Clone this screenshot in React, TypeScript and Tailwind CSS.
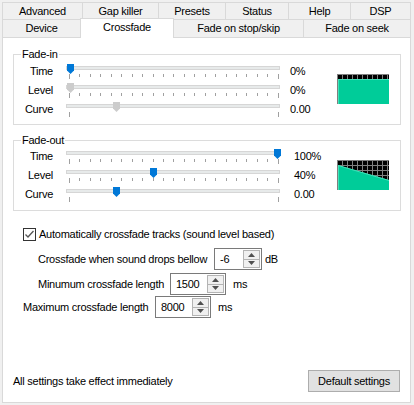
import React from "react";

const TICKS = Array.from({ length: 21 }, (_, i) => i);

function Thumb({ pos, active }: { pos: number; active: boolean }) {
  return (
    <svg
      width="7"
      height="10"
      viewBox="0 0 7 10"
      className="absolute top-[2px]"
      style={{ left: 2 + Math.round(pos * 207) }}
    >
      <path d="M0 0H7V6.5L3.5 10L0 6.5Z" fill={active ? "#0078d7" : "#cccccc"} />
    </svg>
  );
}

function Slider({ pos, active, full }: { pos: number; active: boolean; full: boolean }) {
  const ticks = full ? TICKS : [0, 20];
  return (
    <div className="relative w-[216px] h-[19px] ml-[12px]">
      <div className="mt-[4px] mx-[1px] h-[4px] bg-[#e7eaea] border border-[#d6d6d6]" />
      <div className="mt-[4px] ml-[4px] mr-[2px] flex justify-between items-start">
        {ticks.map((t) => (
          <div
            key={t}
            className={t === 0 || t === 20 ? "w-px h-[5px] bg-[#a0a0a0]" : "w-px h-[3px] bg-[#a0a0a0]"}
          />
        ))}
      </div>
      <Thumb pos={pos} active={active} />
    </div>
  );
}

type Row = { label: string; value: string; pos: number; active: boolean; full: boolean };

function Graph({ left, right }: { left: number; right: number }) {
  const lines = [];
  for (let x = 0; x <= 52; x += 5) lines.push(<line key={"x" + x} x1={x + 0.5} y1="0" x2={x + 0.5} y2="30" />);
  for (let y = 0; y <= 30; y += 5) lines.push(<line key={"y" + y} x1="0" y1={y + 0.5} x2="52" y2={y + 0.5} />);
  return (
    <svg width="52" height="30" viewBox="0 0 52 30">
      <rect width="52" height="30" fill="#000" />
      <g stroke="#808080" strokeWidth="1">{lines}</g>
      <polygon points={`1,${left} 52,${right} 52,30 1,30`} fill="#00cc99" />
      <line x1="1" y1={left + 0.5} x2="52" y2={right + 0.5} stroke="#40e0b8" strokeWidth="1" />
      <line x1="1.5" y1={left} x2="1.5" y2="30" stroke="#40e0b8" strokeWidth="1" />
      <line x1="0.5" y1="0" x2="0.5" y2="30" stroke="#808080" strokeWidth="1" />
    </svg>
  );
}

function Group({
  title,
  rows,
  boxClass,
  valueGap,
  graphTop,
  graph,
}: {
  title: string;
  rows: Row[];
  boxClass: string;
  valueGap: string;
  graphTop: string;
  graph: [number, number];
}) {
  return (
    <fieldset className={`w-[388px] border border-[#dcdcdc] ${boxClass}`}>
      <legend className="ml-[7px] px-[1px] leading-[14px]">{title}</legend>
      <div className="flex">
        <div className="flex flex-col">
          {rows.map((r) => (
            <div key={r.label} className="flex items-center h-[19px]">
              <div className="w-[39px] text-right">{r.label}</div>
              <Slider pos={r.pos} active={r.active} full={r.full} />
              <div className={valueGap}>{r.value}</div>
            </div>
          ))}
        </div>
        <div className={graphTop}>
          <Graph left={graph[0]} right={graph[1]} />
        </div>
      </div>
    </fieldset>
  );
}

function Spin({ value, width }: { value: string; width: string }) {
  return (
    <div className={`flex h-[22px] bg-white border border-[#7a7a7a] ${width}`}>
      <div className="flex-1 pl-[5px] flex items-center">{value}</div>
      <div className="flex flex-col w-[17px] my-px mr-px">
        <div className="flex-1 flex items-center justify-center bg-[#f0f0f0] border border-[#b4b4b4]">
          <svg width="7" height="4" viewBox="0 0 7 4">
            <path d="M0 4L3.5 0L7 4Z" fill="#505050" />
          </svg>
        </div>
        <div className="flex-1 flex items-center justify-center bg-[#f0f0f0] border border-t-0 border-[#b4b4b4]">
          <svg width="7" height="4" viewBox="0 0 7 4">
            <path d="M0 0L3.5 4L7 0Z" fill="#505050" />
          </svg>
        </div>
      </div>
    </div>
  );
}

const TOP_TABS = [
  { name: "Advanced", w: "w-[80px]" },
  { name: "Gap killer", w: "w-[76px]" },
  { name: "Presets", w: "w-[67px]" },
  { name: "Status", w: "w-[63px]" },
  { name: "Help", w: "w-[62px]" },
  { name: "DSP", w: "w-[61px] border-r" },
];

export default function App() {
  return (
    <div className="w-[414px] h-[405px] bg-[#f0f0f0] pt-[2px] pl-[2px] text-[11px] tracking-[-0.25px] whitespace-nowrap text-black font-['Liberation_Sans',Arial,sans-serif]">
      {/* Tabs */}
      <div className="flex h-[17px]">
        {TOP_TABS.map((t) => (
          <div
            key={t.name}
            className={`${t.w} flex items-center justify-center pt-[1px] border-t border-l border-[#d9d9d9]`}
          >
            {t.name}
          </div>
        ))}
      </div>
      <div className="flex h-[18px] items-start">
        <div className="w-[78px] h-[18px] flex items-center justify-center border-t border-l border-[#d9d9d9]">
          Device
        </div>
        <div className="relative z-10 w-[94px] h-[20px] -mt-px flex items-center justify-center pb-[2px] bg-white border-t border-l border-r border-[#d9d9d9]">
          Crossfade
        </div>
        <div className="w-[129px] h-[18px] flex items-center justify-center border-t border-[#d9d9d9]">
          Fade on stop/skip
        </div>
        <div className="w-[108px] h-[18px] flex items-center justify-center border-t border-l border-r border-[#d9d9d9]">
          Fade on seek
        </div>
      </div>

      {/* Panel */}
      <div className="w-[409px] h-[366px] bg-white border border-[#d9d9d9] flex flex-col pt-[9px] pl-[10px]">
        <Group
          title="Fade-in"
          boxClass="pt-[1px] pb-[5px]"
          valueGap="ml-[9px] w-[47px]"
          graphTop="mt-[12px]"
          graph={[5, 5]}
          rows={[
            { label: "Time", value: "0%", pos: 0, active: true, full: true },
            { label: "Level", value: "0%", pos: 0, active: false, full: true },
            { label: "Curve", value: "0.00", pos: 0.22, active: false, full: false },
          ]}
        />
        <Group
          title="Fade-out"
          boxClass="mt-[8px] pb-[6px]"
          valueGap="ml-[13px] w-[43px]"
          graphTop="mt-[13px]"
          graph={[5, 20]}
          rows={[
            { label: "Time", value: "100%", pos: 1, active: true, full: true },
            { label: "Level", value: "40%", pos: 0.4, active: true, full: true },
            { label: "Curve", value: "0.00", pos: 0.22, active: true, full: false },
          ]}
        />

        <div className="flex items-center h-[15px] mt-[16px] ml-[10px]">
          <div className="w-[13px] h-[13px] border border-[#333333] bg-white flex items-center justify-center">
            <svg width="11" height="11" viewBox="0 0 11 11">
              <polyline points="1.5,5.5 4,8 9.5,2" fill="none" stroke="#555555" strokeWidth="1.3" />
            </svg>
          </div>
          <span className="ml-[3px]">Automatically crossfade tracks (sound level based)</span>
        </div>

        <div className="flex items-center mt-[6px] ml-[25px]">
          <div className="w-[176px]">Crossfade when sound drops bellow</div>
          <Spin value="-6" width="w-[48px]" />
          <span className="ml-[3px]">dB</span>
        </div>
        <div className="flex items-center mt-[3px] ml-[25px]">
          <div className="w-[132px]">Minumum crossfade length</div>
          <Spin value="1500" width="w-[56px]" />
          <span className="ml-[7px]">ms</span>
        </div>
        <div className="flex items-center mt-[1px] ml-[10px]">
          <div className="w-[132px]">Maximum crossfade length</div>
          <Spin value="8000" width="w-[56px]" />
          <span className="ml-[7px]">ms</span>
        </div>

        <div className="mt-auto flex items-center justify-between pr-[10px] pb-[10px]">
          <span>All settings take effect immediately</span>
          <button className="w-[92px] h-[22px] bg-[#e1e1e1] border border-[#adadad]">Default settings</button>
        </div>
      </div>
    </div>
  );
}
